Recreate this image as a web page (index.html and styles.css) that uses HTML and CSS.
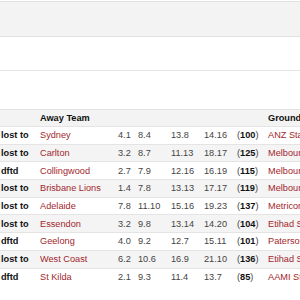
FILE: index.html
```html
<!DOCTYPE html>
<html lang="en">
<head>
    <meta charset="UTF-8">
    <title>Season Results</title>
    <link rel="stylesheet" href="styles.css">
</head>
<body>
    <div class="topbar"></div>
    <div class="blank-row"></div>
    <div class="blank-row tall"></div>

    <table class="results">
        <colgroup>
            <col class="c-result">
            <col class="c-team">
            <col class="c-q1">
            <col class="c-q">
            <col class="c-q">
            <col class="c-q">
            <col class="c-total">
            <col class="c-ground">
        </colgroup>
        <thead>
            <tr>
                <th></th>
                <th>Away Team</th>
                <th></th>
                <th></th>
                <th></th>
                <th></th>
                <th></th>
                <th>Ground</th>
            </tr>
        </thead>
        <tbody>
            <tr>
                <td class="res">lost to</td><td class="team">Sydney</td>
                <td>4.1</td><td>8.4</td><td>13.8</td><td>14.16</td>
                <td>(<b>100</b>)</td><td class="team">ANZ Stadium</td>
            </tr>
            <tr>
                <td class="res">lost to</td><td class="team">Carlton</td>
                <td>3.2</td><td>8.7</td><td>11.13</td><td>18.17</td>
                <td>(<b>125</b>)</td><td class="team">Melbourne Cricket Ground</td>
            </tr>
            <tr>
                <td class="res">dftd</td><td class="team">Collingwood</td>
                <td>2.7</td><td>7.9</td><td>12.16</td><td>16.19</td>
                <td>(<b>115</b>)</td><td class="team">Melbourne Cricket Ground</td>
            </tr>
            <tr>
                <td class="res">lost to</td><td class="team">Brisbane Lions</td>
                <td>1.4</td><td>7.8</td><td>13.13</td><td>17.17</td>
                <td>(<b>119</b>)</td><td class="team">Melbourne Cricket Ground</td>
            </tr>
            <tr>
                <td class="res">lost to</td><td class="team">Adelaide</td>
                <td>7.8</td><td>11.10</td><td>15.16</td><td>19.23</td>
                <td>(<b>137</b>)</td><td class="team">Metricon Stadium</td>
            </tr>
            <tr>
                <td class="res">lost to</td><td class="team">Essendon</td>
                <td>3.2</td><td>9.8</td><td>13.14</td><td>14.20</td>
                <td>(<b>104</b>)</td><td class="team">Etihad Stadium</td>
            </tr>
            <tr>
                <td class="res">dftd</td><td class="team">Geelong</td>
                <td>4.0</td><td>9.2</td><td>12.7</td><td>15.11</td>
                <td>(<b>101</b>)</td><td class="team">Paterson Stadium</td>
            </tr>
            <tr>
                <td class="res">lost to</td><td class="team">West Coast</td>
                <td>6.2</td><td>10.6</td><td>16.9</td><td>21.10</td>
                <td>(<b>136</b>)</td><td class="team">Etihad Stadium</td>
            </tr>
            <tr>
                <td class="res">dftd</td><td class="team">St Kilda</td>
                <td>2.1</td><td>9.3</td><td>11.4</td><td>13.7</td>
                <td>(<b>85</b>)</td><td class="team">AAMI Stadium</td>
            </tr>
        </tbody>
    </table>
</body>
</html>
```

FILE: styles.css
```css
html, body {
    margin: 0;
    padding: 0;
    overflow: hidden;
    background-color: white;
}
body {
    font-family: "Liberation Sans", Arial, sans-serif;
    font-size: 9.2px;
    color: #444;
}
.topbar {
    margin-top: 1px;
    height: 34px;
    background-color: #f3f3f3;
    border-top: 1px solid #e2e2e2;
    border-bottom: 1px solid #e2e2e2;
}
.blank-row {
    height: 33px;
    border-bottom: 1px solid #e6e6e6;
}
.blank-row.tall {
    height: 38px;
    border-bottom-color: #e2e2e2;
}
.results {
    table-layout: fixed;
    width: 366px;
    margin-left: -3px;
    border-collapse: collapse;
}
.c-result { width: 39px; }
.c-team { width: 78px; }
.c-q1 { width: 20px; }
.c-q { width: 33px; }
.c-total { width: 31px; }
.c-ground { width: 104px; }
.results th,
.results td {
    padding: 0 4px;
    height: 16.7px;
    text-align: left;
    white-space: nowrap;
    overflow: hidden;
}
.results th {
    color: #111;
    font-weight: bold;
    background-color: #f3f3f3;
    height: 16px;
}
.results tbody tr {
    border-top: 1px solid #e4e4e4;
}
.results tbody tr:nth-child(even) {
    background-color: #f4f4f4;
}
.results .res {
    color: #111;
    font-weight: bold;
}
.results .team {
    color: #a31f2c;
}
.results b {
    color: #111;
}
```
